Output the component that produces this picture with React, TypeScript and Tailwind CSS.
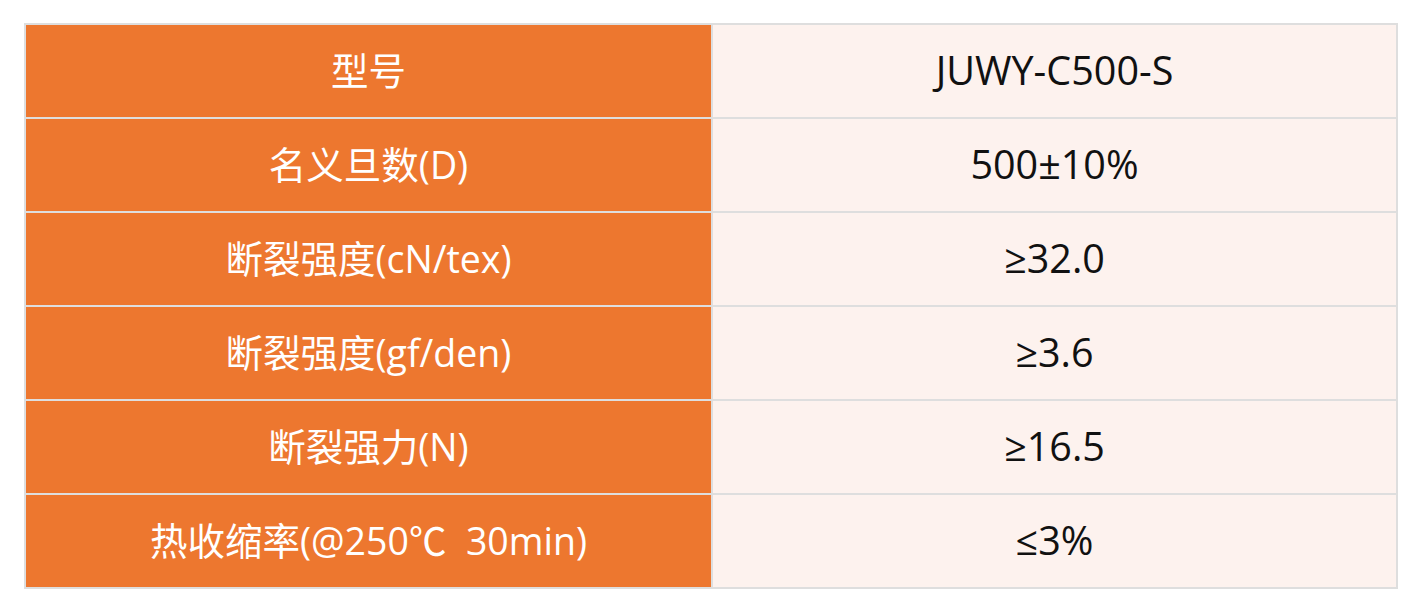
const rows: [string, string][] = [
  ["型号", "JUWY-C500-S"],
  ["名义旦数(D)", "500±10%"],
  ["断裂强度(cN/tex)", "≥32.0"],
  ["断裂强度(gf/den)", "≥3.6"],
  ["断裂强力(N)", "≥16.5"],
  ["热收缩率(@250℃  30min)", "≤3%"],
];

export default function App() {
  return (
    <div className="w-[1424px] h-[612px] bg-white pt-[23px] pl-[24px] font-['Open_Sans','Noto_Sans_CJK_SC',sans-serif]">
      <div className="w-[1374px] border-t-2 border-l-2 border-[#dedede]">
        {rows.map(([label, value]) => (
          <div key={label} className="flex">
            <div className="w-[687px] h-[94px] flex items-center justify-center bg-[#ed772f] text-white text-[37.5px] border-r-2 border-b-2 border-[#dedede] whitespace-pre">
              {label}
            </div>
            <div className="flex-1 h-[94px] flex items-center justify-center bg-[#fdf2ee] text-[#111] text-[39.5px] border-r-2 border-b-2 border-[#dedede]">
              {value}
            </div>
          </div>
        ))}
      </div>
    </div>
  );
}
